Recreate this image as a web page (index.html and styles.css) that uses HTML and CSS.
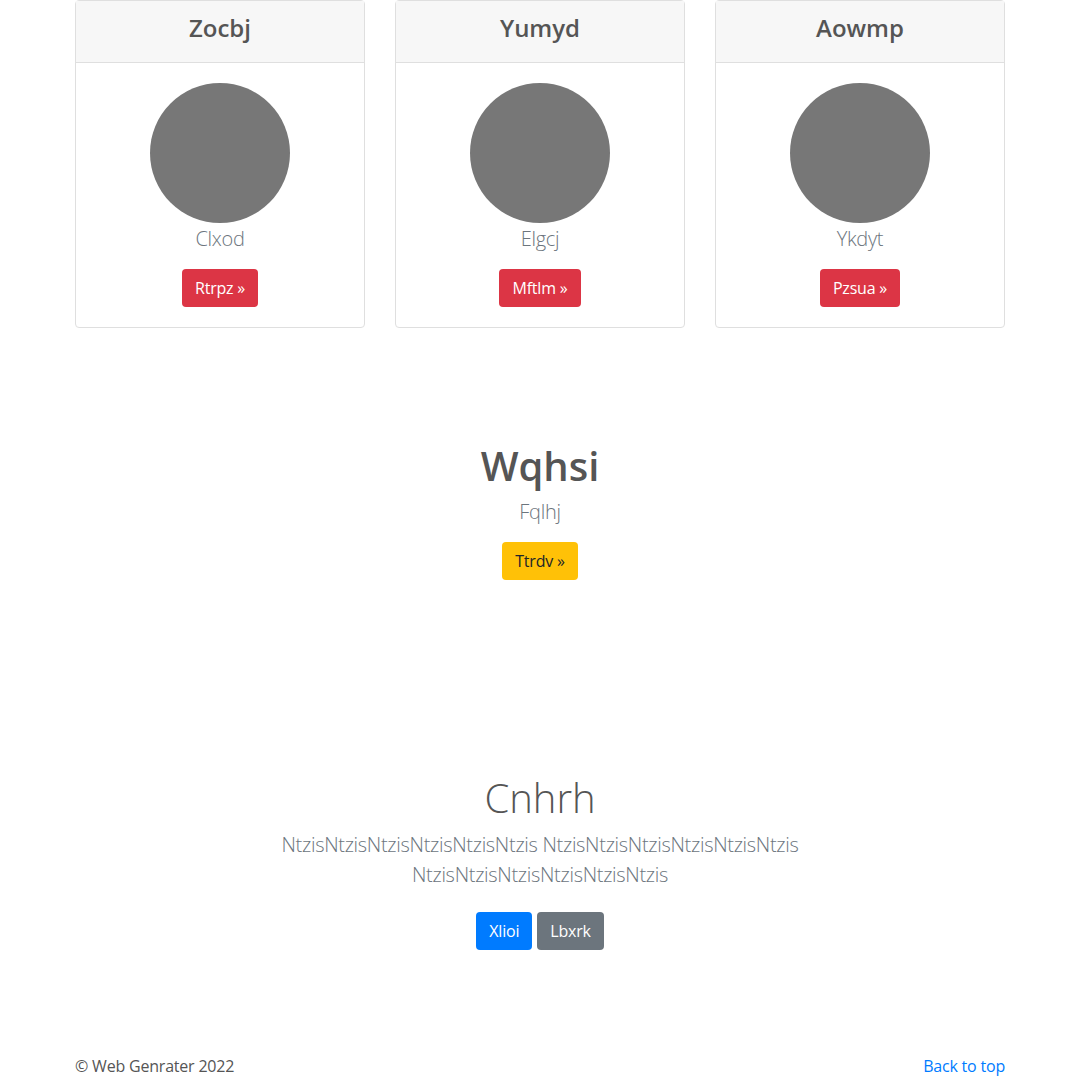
FILE: index.html
```html
<!DOCTYPE html>
<html lang="en">
<head>
<meta charset="utf-8">
<title>Page</title>
<link rel="stylesheet" href="styles.css">
</head>
<body>
<main class="container">
  <section class="cards">
    <div class="card">
      <div class="card-header"><h4>Zocbj</h4></div>
      <div class="card-body">
        <svg class="avatar" width="140" height="140" viewBox="0 0 140 140"><circle cx="70" cy="70" r="70" fill="#777"/></svg>
        <p class="card-text">Clxod</p>
        <a class="btn btn-danger" href="#">Rtrpz »</a>
      </div>
    </div>
    <div class="card">
      <div class="card-header"><h4>Yumyd</h4></div>
      <div class="card-body">
        <svg class="avatar" width="140" height="140" viewBox="0 0 140 140"><circle cx="70" cy="70" r="70" fill="#777"/></svg>
        <p class="card-text">Elgcj</p>
        <a class="btn btn-danger" href="#">Mftlm »</a>
      </div>
    </div>
    <div class="card">
      <div class="card-header"><h4>Aowmp</h4></div>
      <div class="card-body">
        <svg class="avatar" width="140" height="140" viewBox="0 0 140 140"><circle cx="70" cy="70" r="70" fill="#777"/></svg>
        <p class="card-text">Ykdyt</p>
        <a class="btn btn-danger" href="#">Pzsua »</a>
      </div>
    </div>
  </section>

  <section class="feature">
    <h2 class="feature-title">Wqhsi</h2>
    <p class="lead">Fqlhj</p>
    <a class="btn btn-warning" href="#">Ttrdv »</a>
  </section>

  <section class="jumbo">
    <h1 class="jumbo-title">Cnhrh</h1>
    <p class="lead jumbo-lead">NtzisNtzisNtzisNtzisNtzisNtzis NtzisNtzisNtzisNtzisNtzisNtzis NtzisNtzisNtzisNtzisNtzisNtzis</p>
    <div class="btn-row">
      <a class="btn btn-primary" href="#">Xlioi</a>
      <a class="btn btn-secondary" href="#">Lbxrk</a>
    </div>
  </section>

  <footer class="footer">
    <span>© Web Genrater 2022</span>
    <a class="back" href="#">Back to top</a>
  </footer>
</main>
</body>
</html>
```

FILE: styles.css
```css
* { box-sizing: border-box; }
html, body { margin: 0; padding: 0; }
body {
  font-family: "Segoe UI", "Open Sans", "Noto Sans", sans-serif;
  font-size: 16px;
  line-height: 1.5;
  color: #555;
  background: #fff;
}
.container {
  width: 930px;
  margin: 0 auto;
}
.cards {
  display: flex;
  gap: 30px;
}
.card {
  flex: 1;
  border: 1px solid #dfdfdf;
  border-radius: 4px;
  text-align: center;
}
.card-header {
  background: #f7f7f7;
  border-bottom: 1px solid #dfdfdf;
  padding: 13px 20px 0;
  height: 62px;
}
.card-header h4 {
  margin: 0;
  font-size: 24px;
  font-weight: 600;
  line-height: 1.2;
  color: #555;
}
.card-body {
  padding: 20px;
  display: flex;
  flex-direction: column;
  align-items: center;
}
.avatar { display: block; }
.card-text {
  margin: 1px 0 15px;
  font-size: 20px;
  font-weight: 300;
  line-height: 30px;
  color: #6c757d;
  letter-spacing: -0.3px;
}
.btn {
  display: inline-block;
  padding: 6px 12px;
  font-size: 16px;
  line-height: 24px;
  border-radius: 4px;
  text-decoration: none;
  border: 1px solid transparent;
  height: 38px;
  font-weight: 400;
  letter-spacing: -0.2px;
}
.btn-danger { background: #dc3545; color: #fff; }
.btn-warning { background: #ffc107; color: #212529; }
.btn-primary { background: #007bff; color: #fff; }
.btn-secondary { background: #6c757d; color: #fff; }

.feature {
  text-align: center;
  padding-top: 114px;
}
.feature-title {
  margin: 0 0 7px;
  font-size: 40px;
  font-weight: 600;
  line-height: 48px;
  color: #555;
}
.lead {
  font-size: 20px;
  font-weight: 300;
  line-height: 30px;
  color: #6c757d;
  margin: 0 0 15px;
  letter-spacing: -0.3px;
}
.jumbo {
  text-align: center;
  padding-top: 194px;
}
.jumbo-title {
  margin: 0 0 8px;
  font-size: 40px;
  font-weight: 300;
  line-height: 48px;
  color: #555;
}
.jumbo-lead {
  max-width: 560px;
  margin: 0 auto 22px;
}
.btn-row {
  display: flex;
  justify-content: center;
  gap: 5px;
}
.footer {
  display: flex;
  justify-content: space-between;
  margin-top: 104px;
  line-height: 24px;
  color: #555;
  letter-spacing: -0.2px;
}
.back { color: #007bff; text-decoration: none; }
```
